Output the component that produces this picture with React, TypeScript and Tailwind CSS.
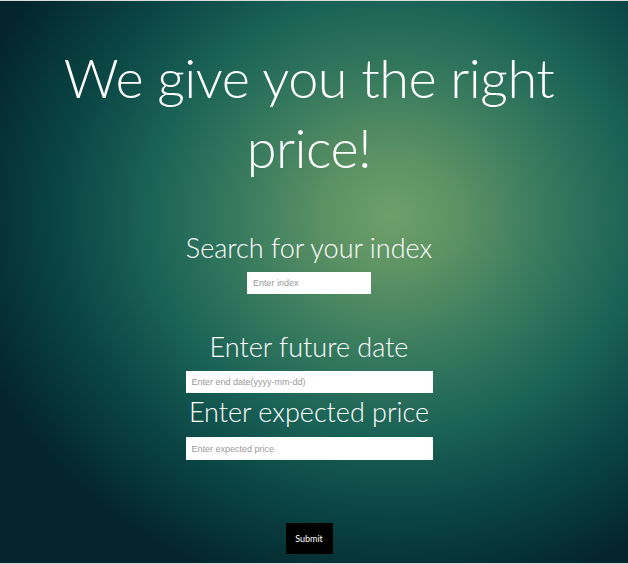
import React, { useState } from 'react';

export default function App() {
  const [index, setIndex] = useState('');
  const [date, setDate] = useState('');
  const [price, setPrice] = useState('');

  return (
    <div
      className="w-[628px] h-[564px] overflow-hidden border-y border-[#d9dcdc] pr-[10px] flex flex-col items-center text-white bg-[radial-gradient(ellipse_440px_390px_at_392px_215px,#6d9f68_0%,#5b9164_16%,#33775d_38%,#1a6256_56%,#0a4544_76%,#03252b_100%)]"
      style={{ fontFamily: 'Lato, "Open Sans", sans-serif' }}
    >
      <h1 className="mt-[42px] w-[540px] text-center text-[54px] leading-[70px] font-light tracking-[-0.5px]">
        We give you the right price!
      </h1>

      <h2 className="mt-[49px] text-[27px] leading-[32px] font-light">Search for your index</h2>
      <input
        value={index}
        onChange={e => setIndex(e.target.value)}
        placeholder="Enter index"
        className="mt-[8px] w-[124px] h-[22px] bg-white px-[6px] text-[9px] text-gray-700 placeholder:text-[#9a9a9a] outline-none"
        style={{ fontFamily: '"Liberation Sans", Arial, sans-serif' }}
      />

      <h2 className="mt-[37px] text-[27px] leading-[32px] font-light">Enter future date</h2>
      <input
        value={date}
        onChange={e => setDate(e.target.value)}
        placeholder="Enter end date(yyyy-mm-dd)"
        className="mt-[8px] w-[247px] h-[22px] bg-white px-[6px] text-[9px] text-gray-700 placeholder:text-[#9a9a9a] outline-none"
        style={{ fontFamily: '"Liberation Sans", Arial, sans-serif' }}
      />

      <h2 className="mt-[3px] text-[27px] leading-[32px] font-light">Enter expected price</h2>
      <input
        value={price}
        onChange={e => setPrice(e.target.value)}
        placeholder="Enter expected price"
        className="mt-[9px] w-[247px] h-[23px] bg-white px-[6px] text-[9px] text-gray-700 placeholder:text-[#9a9a9a] outline-none"
        style={{ fontFamily: '"Liberation Sans", Arial, sans-serif' }}
      />

      <button className="mt-[63px] w-[47px] h-[31px] bg-black text-white text-[9px]">Submit</button>
    </div>
  );
}
